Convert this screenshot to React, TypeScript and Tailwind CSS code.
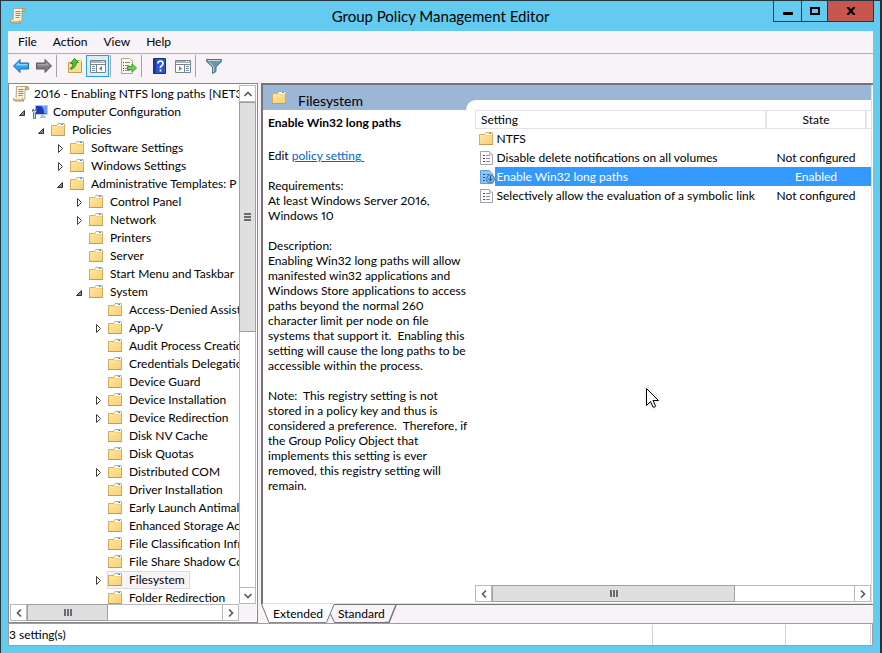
import { useState } from "react";
import type { ReactNode } from "react";

type Node = {
  label: string;
  level: number;
  state?: "open" | "closed";
  icon?: "scroll" | "computer";
};

const nodes: Node[] = [
  { label: "2016 - Enabling NTFS long paths [NET3", level: 0, icon: "scroll" },
  { label: "Computer Configuration", level: 1, state: "open", icon: "computer" },
  { label: "Policies", level: 2, state: "open" },
  { label: "Software Settings", level: 3, state: "closed" },
  { label: "Windows Settings", level: 3, state: "closed" },
  { label: "Administrative Templates: P", level: 3, state: "open" },
  { label: "Control Panel", level: 4, state: "closed" },
  { label: "Network", level: 4, state: "closed" },
  { label: "Printers", level: 4 },
  { label: "Server", level: 4 },
  { label: "Start Menu and Taskbar", level: 4 },
  { label: "System", level: 4, state: "open" },
  { label: "Access-Denied Assistance", level: 5 },
  { label: "App-V", level: 5, state: "closed" },
  { label: "Audit Process Creation", level: 5 },
  { label: "Credentials Delegation", level: 5 },
  { label: "Device Guard", level: 5 },
  { label: "Device Installation", level: 5, state: "closed" },
  { label: "Device Redirection", level: 5, state: "closed" },
  { label: "Disk NV Cache", level: 5 },
  { label: "Disk Quotas", level: 5 },
  { label: "Distributed COM", level: 5, state: "closed" },
  { label: "Driver Installation", level: 5 },
  { label: "Early Launch Antimalware", level: 5 },
  { label: "Enhanced Storage Access", level: 5 },
  { label: "File Classification Infrastructure", level: 5 },
  { label: "File Share Shadow Copy", level: 5 },
  { label: "Filesystem", level: 5, state: "closed" },
  { label: "Folder Redirection", level: 5 },
];

const settings = [
  { name: "NTFS", state: "", folder: true },
  { name: "Disable delete notifications on all volumes", state: "Not configured" },
  { name: "Enable Win32 long paths", state: "Enabled" },
  { name: "Selectively allow the evaluation of a symbolic link", state: "Not configured" },
];

const description = `Enabling Win32 long paths will allow
manifested win32 applications and
Windows Store applications to access
paths beyond the normal 260
character limit per node on file
systems that support it.  Enabling this
setting will cause the long paths to be
accessible within the process.`;

const note = `Note:  This registry setting is not
stored in a policy key and thus is
considered a preference.  Therefore, if
the Group Policy Object that
implements this setting is ever
removed, this registry setting will
remain.`;

function FolderIcon() {
  return (
    <svg width="16" height="16" viewBox="0 0 16 16" className="shrink-0">
      <path d="M0.500 3.500h5l1.500-2h6q0.500 0 0.500 1v11h-13z" fill="#f3d083" stroke="#d6ac5f" />
      <path d="M7 2h6v2H6.500z" fill="#fdfdf6" />
      <path d="M10 2h2v1h-2z" fill="#3a96e8" />
      <path d="M1 4h5.500l1 1H13v8.500H1z" fill="url(#folderFace)" />
      <path d="M0 13.500h14" stroke="#c79a4c" />
      <defs>
        <linearGradient id="folderFace" x1="0" y1="0" x2="1" y2="1">
          <stop offset="0" stopColor="#fee79c" />
          <stop offset="1" stopColor="#f7cf78" />
        </linearGradient>
      </defs>
    </svg>
  );
}

function ScrollIcon() {
  return (
    <svg width="16" height="16" viewBox="0 0 16 16" className="shrink-0">
      <path d="M3.500 0.500H14q1.500 0 1.500 2.500h-3.500v9l-1 2H3z" fill="#f8f2dc" stroke="#b9a67c" />
      <path d="M12.500 3.500v-2q0-1 1.500-1t1.500 2v1z" fill="#d9c596" stroke="#a8925f" />
      <path d="M0.500 12.500h9q0 2 1.500 2.500H2q-1.500 0-1.500-2.500z" fill="#d8c79c" stroke="#a8925f" />
      <path d="M1 12.500h8" stroke="#f4ebcd" />
      <path d="M5.500 3.500h5M5.500 5.500h5M5.500 7.500h5M5.500 9.500h4" stroke="#8d8a86" />
    </svg>
  );
}

function ComputerIcon() {
  return (
    <svg width="16" height="16" viewBox="0 0 16 16" className="shrink-0">
      <path d="M3.500 1.500h12v9h-12z" fill="#1d38c0" stroke="#bcc8d4" />
      <path d="M9 2h6v8l-3-1q0-5-3-7z" fill="#6f9cf4" />
      <path d="M9 11h3v1.500h2v1.500H8v-1.500h1z" fill="#b4bbc3" />
      <path d="M0.500 5.500v2l1 1v6h2v-6l1-1v-2l-1-0.500v1.500h-2V5z" fill="#c4d8e8" stroke="#587791" />
    </svg>
  );
}

function PolicyIcon({ active }: { active?: boolean }) {
  return (
    <svg width="16" height="16" viewBox="0 0 16 16" className="shrink-0">
      <path
        d="M1.500 1.500h9l3 3v10h-12z"
        fill={active ? "#8cc4f5" : "#fcfcfd"}
        stroke={active ? "#5aa2e0" : "#a3a3a8"}
      />
      <path d="M10.500 1.500v3h3" fill={active ? "#b9dc9a" : "#dcdce0"} stroke={active ? "#a8cf6a" : "#bdbdc2"} />
      <path d="M4 5h2v1H4zM4 8h2v1H4zM4 11h2v1H4z" fill={active ? "#1f4f9c" : "#4a4560"} />
      <path d="M7 5.500h4M7 8.500h4M7 11.500h4" stroke={active ? "#4b83c4" : "#8f8ba0"} />
      {active && (
        <>
          <circle cx="11.500" cy="10" r="4" fill="#7db9ee" stroke="#3f7fc0" />
          <path d="M11.500 7v4.500M9.500 9.500l2 2.500 2-2.500" stroke="#1d5596" fill="none" />
        </>
      )}
    </svg>
  );
}

function Expander({ state }: { state?: "open" | "closed" }) {
  return (
    <svg width="13" height="18" viewBox="0 0 13 18" className="shrink-0">
      {state === "open" && <path d="M5.500 7.500v5h-5z" fill="#888" stroke="#303030" />}
      {state === "closed" && <path d="M1.500 5.500v8l4-4z" fill="#fff" stroke="#404040" />}
    </svg>
  );
}

function Arrow({ dir }: { dir: "up" | "down" | "left" | "right" }) {
  const paths = {
    up: "M1.500 7L5 3.500 8.500 7",
    down: "M1.500 3L5 6.500 8.500 3",
    left: "M7 1.500L3.500 5 7 8.500",
    right: "M3 1.500L6.500 5 3 8.500",
  };
  return (
    <svg width="10" height="10" viewBox="0 0 10 10">
      <path d={paths[dir]} fill="none" stroke="#5c5c60" strokeWidth="1.700" />
    </svg>
  );
}

function ScrollButton({ dir }: { dir: "up" | "down" | "left" | "right" }) {
  return (
    <button
      type="button"
      aria-label={`Scroll ${dir}`}
      className="flex size-[17px] shrink-0 items-center justify-center border border-[#b8b8b8] bg-white"
    >
      <Arrow dir={dir} />
    </button>
  );
}

function HScroll({ thumb }: { thumb: string }) {
  return (
    <div className="flex h-[17px] border-y border-[#b8b8b8] bg-white">
      <div className="-my-px flex flex-1">
        <ScrollButton dir="left" />
        <div className={`flex items-center justify-center gap-px border border-[#a0a0a0] bg-[#dfdfdf] ${thumb}`}>
          <span className="h-[7px] w-[2px] bg-[#6c6c70]" />
          <span className="h-[7px] w-[2px] bg-[#6c6c70]" />
          <span className="h-[7px] w-[2px] bg-[#6c6c70]" />
        </div>
        <div className="flex-1" />
        <ScrollButton dir="right" />
      </div>
    </div>
  );
}

function ToolButton({ label, active, children }: { label: string; active?: boolean; children: ReactNode }) {
  return (
    <button
      type="button"
      aria-label={label}
      className={`flex h-[22px] w-[23px] items-center justify-center ${active ? "border border-[#26a0da] bg-[#d9eef9]" : ""}`}
    >
      {children}
    </button>
  );
}

function Separator() {
  return <span className="ml-px mr-1.5 h-[22px] w-px bg-[#a5a2a6]" />;
}

function Toolbar() {
  return (
    <div className="flex h-7 shrink-0 items-start bg-[#f7f3f7] pl-px">
      <ToolButton label="Back">
        <svg width="16" height="16" viewBox="0 0 16 16">
          <path d="M0.500 8L7 1.500V5h8.500v6H7v3.500z" fill="#2ba3ee" stroke="#1a6fb4" />
          <path d="M2.500 7.500L6 4v2h8.500v1.500z" fill="#8ed3fb" />
        </svg>
      </ToolButton>
      <ToolButton label="Forward">
        <svg width="16" height="16" viewBox="0 0 16 16">
          <path d="M15.500 8L9 1.500V5H0.500v6H9v3.500z" fill="#7c7c7e" stroke="#5a5a5c" />
          <path d="M13.500 7.500L10 4v2H1.500v1.500z" fill="#a6a6a8" />
        </svg>
      </ToolButton>
      <Separator />
      <ToolButton label="Up one level">
        <svg width="16" height="16" viewBox="0 0 16 16">
          <path d="M1.500 4.500h6l1-2h5l1 1v11h-13z" fill="#f8dc90" stroke="#c99d50" />
          <path d="M10 3.500h4" stroke="#fff" />
          <path d="M3 10.500q3-1 3-5H3.500L7.500 0.500 11.500 4.500H9.500q-0.500 5-5.500 7z" fill="#4cc43a" stroke="#2d8f25" />
        </svg>
      </ToolButton>
      <ToolButton label="Show/Hide Console Tree" active>
        <svg width="16" height="16" viewBox="0 0 16 16">
          <path d="M0.500 2.500h15v12h-15z" fill="#fff" stroke="#7c838c" />
          <path d="M1 3h14v2H1z" fill="#aab2bc" />
          <path d="M11 3.500h1M13 3.500h1" stroke="#fff" />
          <path d="M1 6.500h14M6.500 7v7" stroke="#7c838c" />
          <path d="M2 8.500h3M2 10.500h3M2 12.500h3" stroke="#6f8fb8" />
          <path d="M12 8v5L9 10.500z" fill="#43ad35" />
        </svg>
      </ToolButton>
      <Separator />
      <ToolButton label="Export List">
        <svg width="16" height="16" viewBox="0 0 16 16">
          <path d="M0.500 0.500h8l3 3v12h-11z" fill="#fbf8ec" stroke="#b0a88c" />
          <path d="M4 4.500h5M4 7.500h4M4 10.500h3M4 12.500h5" stroke="#8a8794" />
          <path d="M2 4.500h1M2 7.500h1M2 10.500h1M2 12.500h1" stroke="#404050" />
          <path d="M6.500 8.500h4.500V6l4.500 4-4.500 4v-2.500H6.500z" fill="#6fd24a" stroke="#3c9c2a" />
        </svg>
      </ToolButton>
      <Separator />
      <ToolButton label="Help">
        <svg width="16" height="16" viewBox="0 0 16 16">
          <path d="M1.500 0.500h12v15h-12z" fill="#2f55c8" stroke="#1c2f86" />
          <path d="M2 1h2v14H2z" fill="#1c3a9c" />
          <path d="M6 5.500q0-2.500 2.500-2.500T11 5.500q0 1.500-1.500 2.300T8.500 10M8.500 11.500v2" stroke="#fff" strokeWidth="1.700" fill="none" />
        </svg>
      </ToolButton>
      <ToolButton label="Show/Hide Action Pane">
        <svg width="16" height="16" viewBox="0 0 16 16">
          <path d="M0.500 2.500h15v12h-15z" fill="#fff" stroke="#7c838c" />
          <path d="M1 3h14v2H1z" fill="#aab2bc" />
          <path d="M11 3.500h1M13 3.500h1" stroke="#fff" />
          <path d="M1 6.500h14M9.500 7v7" stroke="#7c838c" />
          <path d="M11 8.500h3M11 10.500h3M11 12.500h3" stroke="#6f8fb8" />
          <path d="M4 8v5l3-2.500z" fill="#43ad35" />
        </svg>
      </ToolButton>
      <Separator />
      <ToolButton label="Filter">
        <svg width="16" height="16" viewBox="0 0 16 16">
          <path d="M0.500 1.500h15v2L10 9v4.500l-3.500 2V9L0.500 3.500z" fill="#6d94ad" stroke="#52748a" />
          <path d="M2 2.500h12" stroke="#c5d8e4" />
          <path d="M3 4l4.500 4.500V14" stroke="#b5cedd" fill="none" />
        </svg>
      </ToolButton>
    </div>
  );
}

// Left edge of each level's expander, 19px apart
const indents = ["", "pl-[9px]", "pl-[28px]", "pl-[47px]", "pl-[66px]", "pl-[85px]"];

function Tree({ selected, onSelect }: { selected: string; onSelect: (label: string) => void }) {
  return (
    <div className="flex w-[250px] shrink-0 flex-col border border-[#828790] bg-white p-px">
      <div className="flex min-h-0 flex-1">
        <ul className="min-w-0 flex-1 overflow-hidden">
          {nodes.map((node) => (
            <li key={node.label} className={`flex h-[18px] ${indents[node.level]}`}>
              {node.level > 0 && <Expander state={node.state} />}
              <button
                type="button"
                onClick={() => onSelect(node.label)}
                className={`-ml-px flex h-[18px] items-center whitespace-nowrap border pr-1 ${node.level === 0 ? "pl-[3px]" : ""} ${
                  node.label === selected ? "border-[#dcd8dc] bg-[#f7f3f7]" : "border-transparent"
                }`}
              >
                {node.icon === "scroll" ? <ScrollIcon /> : node.icon === "computer" ? <ComputerIcon /> : <FolderIcon />}
                <span className="ml-[5px]">{node.label}</span>
              </button>
            </li>
          ))}
        </ul>
        <div className="flex w-[17px] flex-col border-x border-[#b8b8b8]">
          <div className="-mx-px flex flex-1 flex-col">
            <ScrollButton dir="up" />
            <div className="flex h-[230px] flex-col items-center justify-center gap-px border border-[#a0a0a0] bg-[#dfdfdf]">
              <span className="h-[2px] w-[7px] bg-[#6c6c70]" />
              <span className="h-[2px] w-[7px] bg-[#6c6c70]" />
              <span className="h-[2px] w-[7px] bg-[#6c6c70]" />
            </div>
            <div className="flex-1" />
            <ScrollButton dir="down" />
          </div>
        </div>
      </div>
      <div className="flex bg-[#f7f3f7] pr-[17px]">
        <div className="flex-1">
          <HScroll thumb="w-[81px]" />
        </div>
      </div>
    </div>
  );
}

function Details() {
  const [row, setRow] = useState("Enable Win32 long paths");
  return (
    <div className="flex min-h-0 flex-1 border-l-2 border-t-2 border-[#77737a] bg-white pr-px">
      <div className="flex min-w-0 flex-1 flex-col border-b border-r border-[#e3dfe3]">
        <div className="flex h-[15px] shrink-0 bg-[#9cb6d6]" />
        <div className="flex min-h-0 flex-1">
          <section className="w-[203px] shrink-0">
            <div className="-mt-[15px] flex h-[25px] items-center bg-[#9cb6d6] pl-[9px]">
              <FolderIcon />
              <h2 className="ml-2.5 pt-1.5 text-sm">Filesystem</h2>
            </div>
            <div className="whitespace-pre pl-[5px] pt-[5px] leading-[15px]">
              <h3 className="font-bold">Enable Win32 long paths</h3>
              <p className="mt-[18px]">
                Edit{" "}
                <a href="#policy" className="text-[#0066cc] underline">
                  policy setting{" "}
                </a>
              </p>
              <p className="mt-[15px]">{"Requirements:\nAt least Windows Server 2016,\nWindows 10"}</p>
              <p className="mt-[15px]">Description:</p>
              <p>{description}</p>
              <p className="mt-[15px]">{note}</p>
            </div>
          </section>
          <section className="flex min-w-0 flex-1 flex-col">
            <div className="h-[10px] shrink-0 bg-[#9cb6d6]">
              <div className="h-full rounded-tl-[10px] bg-white" />
            </div>
            <div className="flex min-h-0 flex-1 flex-col pl-[9px] pb-px">
              <div className="flex-1">
                <table className="w-full table-fixed border-collapse whitespace-nowrap">
                  <colgroup>
                    <col />
                    <col className="w-[100px]" />
                    <col className="w-[5px]" />
                  </colgroup>
                  <thead>
                    <tr className="h-[18px] border border-r-0 border-[#e7e2e5]">
                      <th className="border-r-2 border-[#e7e2e5] p-0 pl-[5px] text-left font-normal">Setting</th>
                      <th className="border-r-2 border-[#e7e2e5] p-0 font-normal">State</th>
                      <th className="p-0" />
                    </tr>
                  </thead>
                  <tbody>
                    {settings.map((s) => {
                      const on = s.name === row;
                      return (
                        <tr key={s.name} className="h-[19px]" onClick={() => setRow(s.name)}>
                          <td className="p-0">
                            <div className="flex h-[19px] items-center pl-[3px]">
                              {s.folder ? <FolderIcon /> : <PolicyIcon active={on} />}
                              <span className={`flex h-[19px] flex-1 items-center pl-0.5 ${on ? "bg-[#3399ff] text-white" : ""}`}>
                                {s.name}
                              </span>
                            </div>
                          </td>
                          <td className={`p-0 text-center ${on ? "bg-[#3399ff] text-white" : ""}`}>{s.state}</td>
                          <td className={`p-0 ${on ? "bg-[#3399ff]" : ""}`} />
                        </tr>
                      );
                    })}
                  </tbody>
                </table>
              </div>
              <HScroll thumb="w-[243px]" />
            </div>
          </section>
        </div>
      </div>
    </div>
  );
}

function Tabs() {
  return (
    <div className="flex h-[19px] bg-[#f7f3f7]">
      <div className="flex bg-white">
        <svg width="9" height="19" viewBox="0 0 9 19">
          <path d="M0 0l8 18.500h-8z" fill="#f7f3f7" />
          <path d="M0.500 0l7.500 18.500h1" fill="none" stroke="#77737a" />
        </svg>
        <button type="button" className="border-b border-[#8a868c] px-[3px] pt-px">
          Extended
        </button>
      </div>
      <svg width="12" height="19" viewBox="0 0 12 19">
        <path d="M0 0h8l-7 18.500h-1z" fill="#fff" />
        <path d="M0.500 18.500L8 0.500h4M4.500 10l4 8.500h3.500" fill="none" stroke="#77737a" />
      </svg>
      <button type="button" className="border-y border-[#77737a]">
        Standard
      </button>
      <div className="flex-1 border-t border-[#77737a]">
        <svg width="12" height="18" viewBox="0 0 12 18">
          <path d="M0 17.500h4L11 0" fill="none" stroke="#77737a" strokeWidth="1.500" />
        </svg>
      </div>
    </div>
  );
}

export default function App() {
  const [selected, setSelected] = useState("Filesystem");

  return (
    <div className="relative flex h-screen flex-col overflow-hidden border-l border-t border-r-2 border-[#26343c] bg-[#63cbef] px-[7px] pb-[7px] font-[Lato,'Noto_Sans',sans-serif] text-xs proportional-nums text-black">
      <header className="flex h-[30px] shrink-0">
        <div className="flex w-[100px] items-center pl-0.5">
          <ScrollIcon />
        </div>
        <h1 className="flex-1 pt-1 text-center text-[15px] leading-[22px]">Group Policy Management Editor</h1>
        <div className="-mr-px flex h-[21px] border-x border-b border-[#26343c]">
          <button type="button" aria-label="Minimize" className="flex w-[27px] items-center justify-center pt-1">
            <span className="h-[3px] w-[10px] bg-black" />
          </button>
          <button type="button" aria-label="Maximize" className="flex w-[27px] items-center justify-center border-x border-[#26343c]">
            <span className="h-2 w-[10px] border-2 border-black" />
          </button>
          <button type="button" aria-label="Close" className="flex w-[45px] items-center justify-center bg-[#c75650]">
            <svg width="10" height="8" viewBox="0 0 10 8">
              <path d="M1.500 0l7 8M8.500 0l-7 8" stroke="#000" strokeWidth="2.200" />
            </svg>
          </button>
        </div>
      </header>

      <main className="flex min-h-0 flex-1 flex-col border-b border-[#a09ca4] bg-[#f7f3f7]">
        <nav className="flex h-[23px] shrink-0 items-center gap-4 border-b border-[#b0acb4] pl-2.5">
          <button type="button">File</button>
          <button type="button">Action</button>
          <button type="button">View</button>
          <button type="button">Help</button>
        </nav>
        <div className="h-px shrink-0" />
        <Toolbar />
        <div className="flex min-h-0 flex-1">
          <Tree selected={selected} onSelect={setSelected} />
          <div className="ml-[3px] flex min-w-0 flex-1 flex-col">
            <Details />
            <Tabs />
          </div>
        </div>
        <footer className="flex h-[22px] shrink-0 border border-b-0 border-[#a09ca4] bg-white">
          <span className="flex-1 self-center pt-px">3 setting(s)</span>
          <span className="mt-px w-[133px] border-l border-[#d4d0d4]" />
          <span className="mr-px mt-px w-[86px] border-x border-[#d4d0d4]" />
        </footer>
      </main>

      <svg width="16" height="24" viewBox="0 0 16 24" className="pointer-events-none absolute left-[645px] top-[387px] drop-shadow">
        <path d="M0.500 0.500v17l4-4 2.500 5.500q2 1 2.500-1l-2.500-5.500h5.500z" fill="#fff" stroke="#000" />
      </svg>
    </div>
  );
}
